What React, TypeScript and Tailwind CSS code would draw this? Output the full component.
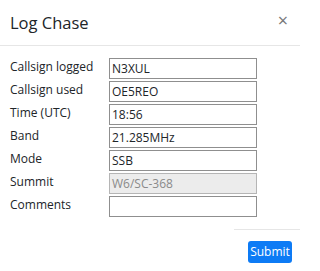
import React from "react";

const fields: { label: string; value: string; disabled?: boolean }[] = [
  { label: "Callsign logged", value: "N3XUL" },
  { label: "Callsign used", value: "OE5REO" },
  { label: "Time (UTC)", value: "18:56" },
  { label: "Band", value: "21.285MHz" },
  { label: "Mode", value: "SSB" },
  { label: "Summit", value: "W6/SC-368", disabled: true },
  { label: "Comments", value: "" },
];

const App: React.FC = () => {
  return (
    <div
      className="w-[300px] h-[271px] bg-white text-[#212529] overflow-hidden"
      style={{ fontFamily: '"Open Sans", "Noto Sans", sans-serif' }}
    >
      {/* header */}
      <div className="h-[46px] flex items-center justify-between pl-[10px] pr-[12px] border-b border-[#e6e6e6]">
        <h2 className="text-[16.5px] leading-none pt-[2px]">Log Chase</h2>
        <span className="text-[18px] leading-none text-[#777] pb-[6px]">×</span>
      </div>

      {/* body */}
      <div className="pt-[12px] px-[10px] flex flex-col gap-[2px]">
        {fields.map((f) => (
          <div key={f.label} className="flex items-center">
            <label className="w-[99px] text-[12px] leading-none pb-[3px]">{f.label}</label>
            <div
              className={
                f.disabled
                  ? "w-[148px] h-[21px] border border-[#b5b5b5] bg-[#ececec] text-[#8a8a8a] text-[12px] flex items-center px-[2px] pt-[1px]"
                  : "w-[148px] h-[21px] border border-[#8f8f8f] bg-white text-[12px] flex items-center px-[2px] pt-[1px]"
              }
            >
              {f.value}
            </div>
          </div>
        ))}
      </div>

      {/* footer */}
      <div className="mt-[12px] flex justify-end">
        <div className="w-[66px] border-t border-[#e6e6e6]" />
      </div>
      <div className="pt-[11px] pr-[8px] flex justify-end">
        <button className="w-[44px] h-[22px] rounded-[3px] bg-[#0d7bf5] text-white text-[12px] leading-none pb-[1px]">
          Submit
        </button>
      </div>
    </div>
  );
};

export default App;
